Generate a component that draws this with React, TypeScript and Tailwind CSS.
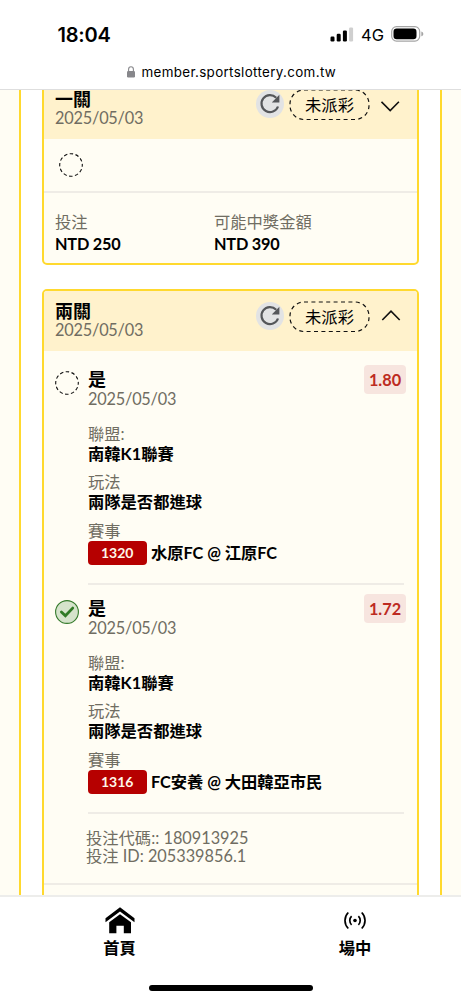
import type { ReactNode } from 'react';

function StatusBar() {
  return (
    <div className="flex h-[62px] items-end justify-between pr-[37.5px] pl-[57.5px]">
      <span className="h-[39px] font-['Inter'] text-[20px] leading-[24px] font-semibold tracking-[-0.2px]">18:04</span>
      <div className="flex h-[39px] items-start">
        <svg className="mt-[4px]" width="24" height="15" viewBox="0 0 24 15">
          <rect x="0.5" y="9.5" width="4" height="5" rx="1.2" />
          <rect x="6.7" y="6.8" width="4" height="7.7" rx="1.2" />
          <rect x="12.9" y="3.6" width="4" height="10.9" rx="1.2" />
          <rect x="19.1" y="0.5" width="4" height="14" rx="1.2" fill="#cfcfcf" />
        </svg>
        <span className="ml-[7px] w-[29.5px] font-['Inter'] text-[16.5px] leading-[24px] font-normal">4G</span>
        <svg className="mt-[3px]" width="33" height="16" viewBox="0 0 33 16">
          <rect x="0.7" y="0.7" width="28" height="14.4" rx="4.8" fill="none" stroke="#a5a5a5" strokeWidth="1.2" />
          <rect x="2.5" y="2.5" width="23" height="10.8" rx="3.2" />
          <path d="M30.3 5.5c1.5.6 2 1.5 2 2.4s-.5 1.8-2 2.4z" fill="#a5a5a5" />
        </svg>
      </div>
    </div>
  );
}

function AddressBar() {
  return (
    <div className="flex h-[28px] items-start border-b border-[#dedede] pl-[126px]">
      <svg className="mt-[4px]" width="10" height="12" viewBox="0 0 10 12">
        <rect x="1" y="5" width="8" height="6.5" rx="1.2" fill="#87878b" />
        <path d="M2.6 5.5V3.2a2.4 2.4 0 0 1 4.8 0v2.3" fill="none" stroke="#87878b" strokeWidth="1.1" />
      </svg>
      <span className="ml-[5.5px] font-['Inter'] text-[13.4px] leading-[20px] tracking-[0.34px] whitespace-nowrap">
        member.sportslottery.com.tw
      </span>
    </div>
  );
}

function RefreshIcon() {
  return (
    <svg width="28" height="28" viewBox="0 0 28 28">
      <circle cx="14" cy="14" r="14" fill="#e2e3e4" />
      <path d="M20.2 7.8A8.5 8.5 0 1 0 22 16.5" fill="none" stroke="#55575a" strokeWidth="2.2" />
      <path d="M23.4 4.8v7.6h-7.6z" fill="#55575a" />
    </svg>
  );
}

function Chevron({ up }: { up?: boolean }) {
  return (
    <svg className={up ? 'mt-[9px]' : 'mt-[12px]'} width="20" height="12" viewBox="0 0 20 12">
      <path d={up ? 'M1.3 11 10 2.2l8.7 8.8' : 'M.5 1.8l8.7 8.8 8.7-8.8'} fill="none" stroke="#111" strokeWidth="1.6" />
    </svg>
  );
}

function PendingIcon() {
  return (
    <svg width="24" height="24" viewBox="0 0 24 24">
      <circle cx="12" cy="12" r="11.3" fill="none" stroke="#111" strokeWidth="1.1" strokeDasharray="3.5 2.42" strokeDashoffset="1.7" />
    </svg>
  );
}

function WonIcon() {
  return (
    <svg width="24" height="24" viewBox="0 0 24 24">
      <circle cx="12" cy="12" r="11.4" fill="#d5e3cb" stroke="#347a2b" strokeWidth="1.1" />
      <path d="M6.4 11.9l4 3.9 7.3-7.7" fill="none" stroke="#2f7a25" strokeWidth="2.8" strokeLinecap="round" />
    </svg>
  );
}

function CardHeader({ title, open }: { title: string; open?: boolean }) {
  return (
    <div className="flex h-[60px] items-start justify-between bg-[#fff2cc] pt-[9px] pr-[16px] pl-[11px]">
      <div className="pt-[3px]">
        <div className="mb-px text-[18px] leading-[16px] font-bold">{title}</div>
        <div className="leading-[20px] tracking-[-0.2px] text-[#706d62]">2025/05/03</div>
      </div>
      <div className="flex items-start">
        <div className="mt-[2px]">
          <RefreshIcon />
        </div>
        <div className="relative mt-px ml-[5px] flex h-[32px] w-[81px] items-center justify-center">
          <svg className="absolute inset-0" width="81" height="32" viewBox="0 0 81 32">
            <rect x="1" y="1" width="79" height="29.5" rx="14" fill="none" stroke="#111" strokeWidth="1.2" strokeDasharray="4 3.4" />
          </svg>
          <span className="leading-[20px]">未派彩</span>
        </div>
        <div className="ml-[11px]">
          <Chevron up={open} />
        </div>
      </div>
    </div>
  );
}

function Card({ children, className }: { children: ReactNode; className: string }) {
  return (
    <section className={`mx-[21px] overflow-hidden border-2 border-[#ffd92e] bg-[#fffdf4] ${className}`}>{children}</section>
  );
}

function Amount({ label, value }: { label: string; value: string }) {
  return (
    <div>
      <div className="leading-[22px] text-[#706d62]">{label}</div>
      <div className="leading-[21px] font-bold tracking-[-0.2px]">{value}</div>
    </div>
  );
}

function Field({ label, value }: { label: string; value: string }) {
  return (
    <div className="mb-[8px]">
      <div className="leading-[20px] text-[#706d62]">{label}</div>
      <div className="leading-[20px] font-bold">{value}</div>
    </div>
  );
}

interface Pick {
  won?: boolean;
  odds: string;
  code: string;
  match: string;
}

function PickRow({ won, odds, code, match }: Pick) {
  return (
    <div className="mb-[10px] flex h-[219px] items-start px-[11px] last:mb-0">
      <div className="mt-[4.5px]">{won ? <WonIcon /> : <PendingIcon />}</div>
      <div className="mr-[2px] ml-[9px] flex h-[219px] flex-1 flex-col border-b-2 border-[#efece6] pt-[4px]">
        <div className="flex h-[54px] items-start justify-between">
          <div>
            <div className="text-[18px] leading-[19px] font-bold">是</div>
            <div className="leading-[20px] tracking-[-0.2px] text-[#706d62]">2025/05/03</div>
          </div>
          <div className="-mt-[5px] -mr-[2px] h-[29px] w-[42px] rounded-[4px] bg-[#f7e5df] text-center leading-[30px] font-bold text-[#bd2b22]">
            {odds}
          </div>
        </div>
        <Field label="聯盟:" value="南韓K1聯賽" />
        <Field label="玩法" value="兩隊是否都進球" />
        <div className="leading-[21px] text-[#706d62]">賽事</div>
        <div className="flex h-[24px] items-center font-bold whitespace-nowrap">
          <span className="mr-[4.5px] h-[24px] w-[58.5px] rounded-[4px] bg-[#b60000] text-center text-[14px] leading-[24px] text-[#fff6e8]">{code}</span>
          <span className="leading-[24px] tracking-[-0.05px]">{match}</span>
        </div>
      </div>
    </div>
  );
}

function BottomNav() {
  return (
    <nav className="flex h-[105px] flex-col justify-between border-t-2 border-[#ededeb] bg-white pb-[9px]">
      <div className="grid grid-cols-[239px_222px] font-bold">
        <div className="flex flex-col items-center">
          <svg className="mt-[10px]" width="30" height="27" viewBox="0 0 30 27">
            <path d="M15 0.3 29.5 11.2v4L15 4.6.5 15.2v-4z" />
            <path d="M15 7.2 26 15.3V26.3H18.8v-7.6h-7.4v7.6H4.2v-11z" />
          </svg>
          <span className="leading-[28px]">首頁</span>
        </div>
        <div className="flex flex-col items-center pl-[10px]">
          <svg className="mt-[13.5px] mb-[4.5px]" width="24" height="19" viewBox="0 0 24 19" fill="none" stroke="#000" strokeWidth="1.7">
            <circle cx="12" cy="9.5" r="1.8" fill="#000" stroke="none" />
            <path d="M8.6 5.2a6 6 0 0 0 0 8.6M15.4 5.2a6 6 0 0 1 0 8.6M5.3 1.5a11.3 11.3 0 0 0 0 16M18.7 1.5a11.3 11.3 0 0 1 0 16" />
          </svg>
          <span className="leading-[28px]">場中</span>
        </div>
      </div>
      <div className="ml-[149px] h-[6px] w-[164px] rounded-full bg-black" />
    </nav>
  );
}

export default function App() {
  return (
    <div className="flex h-[1000px] w-[461px] flex-col overflow-hidden bg-white font-['Lato','Noto_Sans_CJK_TC',sans-serif] text-[16.3px] text-black">
      <StatusBar />
      <AddressBar />
      <main className="h-[805px] overflow-hidden bg-[#fffdf4] px-[19px]">
        <div className="h-full border-x-2 border-[#ffd92e] bg-white">
          <div className="-translate-y-[13px]">
            <Card className="h-[188px] rounded-[5px]">
              <CardHeader title="一關" />
              <div className="flex h-[54px] items-center border-b-2 border-[#efece6] pl-[15px]">
                <PendingIcon />
              </div>
              <div className="grid grid-cols-[159px_1fr] pt-[18px] pl-[11px]">
                <Amount label="投注" value="NTD 250" />
                <Amount label="可能中獎金額" value="NTD 390" />
              </div>
            </Card>
            <Card className="mt-[24px] h-[640px] rounded-t-[5px]">
              <CardHeader title="兩關" open />
              <div className="pt-[15px]">
                <PickRow odds="1.80" code="1320" match="水原FC @ 江原FC" />
                <PickRow won odds="1.72" code="1316" match="FC安養 @ 大田韓亞市民" />
              </div>
              <div className="h-[71px] border-b-2 border-[#efece6] pt-[15px] pl-[42px] leading-[18px] text-[#706d62]">
                <div>投注代碼:: 180913925</div>
                <div>投注 ID: 205339856.1</div>
              </div>
            </Card>
          </div>
        </div>
      </main>
      <BottomNav />
    </div>
  );
}
